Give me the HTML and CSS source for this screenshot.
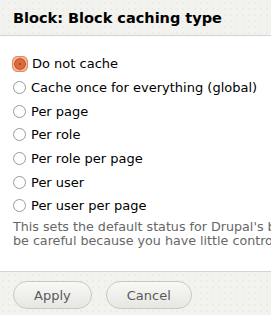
FILE: index.html
```html
<!DOCTYPE html>
<html lang="en">
<head>
    <meta charset="UTF-8">
    <title>Block caching type</title>
    <link rel="stylesheet" href="styles.css">
</head>
<body>
    <div class="dialog">
        <div class="dialog-title">Block: Block caching type</div>
        <div class="dialog-body">
            <div class="radios">
                <label class="radio"><input type="radio" name="cache" checked><span class="mark"></span>Do not cache</label>
                <label class="radio"><input type="radio" name="cache"><span class="mark"></span>Cache once for everything (global)</label>
                <label class="radio"><input type="radio" name="cache"><span class="mark"></span>Per page</label>
                <label class="radio"><input type="radio" name="cache"><span class="mark"></span>Per role</label>
                <label class="radio"><input type="radio" name="cache"><span class="mark"></span>Per role per page</label>
                <label class="radio"><input type="radio" name="cache"><span class="mark"></span>Per user</label>
                <label class="radio"><input type="radio" name="cache"><span class="mark"></span>Per user per page</label>
            </div>
            <div class="description">This sets the default status for Drupal's built-in block caching method;<br>be careful because you have little control over when this cache is flushed.</div>
        </div>
        <div class="dialog-buttons">
            <button class="btn">Apply</button>
            <button class="btn">Cancel</button>
        </div>
    </div>
</body>
</html>
```

FILE: styles.css
```css
body {
    margin: 0;
    font-family: "DejaVu Sans", sans-serif;
    background: #fff;
    color: #000;
    overflow: hidden;
}
.dialog {
    width: 271px;
    height: 315px;
    display: flex;
    flex-direction: column;
}
.dialog-title {
    height: 36px;
    box-sizing: border-box;
    padding: 10px 13px 0;
    background-color: #f2f2ee;
    background-image: radial-gradient(#ebebe7 0.7px, transparent 1px);
    background-size: 6px 6px;
    border-bottom: 1px solid #d4d4d0;
    font-weight: bold;
    font-size: 14.5px;
    white-space: nowrap;
}
.dialog-body {
    flex: 1;
    padding: 16px 0 0 12px;
    overflow: hidden;
}
.radios {
    display: flex;
    flex-direction: column;
}
.radio {
    display: flex;
    align-items: center;
    height: 23.7px;
    font-size: 13px;
    white-space: nowrap;
}
.radio input {
    display: none;
}
.mark {
    width: 11px;
    height: 11px;
    border: 1px solid #9a9a9a;
    border-radius: 50%;
    background: #fff;
    margin: 0 5px 0 1px;
    box-sizing: content-box;
}
.radio input:checked + .mark {
    width: 14px;
    height: 14px;
    border: 1px solid #e98a5e;
    border-radius: 5px;
    background: radial-gradient(circle, #a84a28 0 1px, #dd6a3c 1.5px 4.5px, #b65630 5px 5.5px, #f3b394 6px);
    margin: 0 4px 0 0;
}
.description {
    margin: 2px 0 0 1px;
    font-size: 12.7px;
    color: #666;
    line-height: 14px;
    white-space: nowrap;
}
.dialog-buttons {
    height: 44px;
    box-sizing: border-box;
    border-top: 1px solid #d4d4d0;
    background-color: #f2f2ee;
    background-image: radial-gradient(#ebebe7 0.7px, transparent 1px);
    background-size: 6px 6px;
    padding: 9px 13px 0;
    display: flex;
    gap: 14px;
    align-items: flex-start;
}
.btn {
    font-family: "DejaVu Sans", sans-serif;
    font-size: 13px;
    color: #5a5a5a;
    height: 28px;
    padding: 0 20px;
    border: 1px solid #c8c8c4;
    border-radius: 14px;
    background: linear-gradient(#f8f8f6, #e6e6e2);
}
```
